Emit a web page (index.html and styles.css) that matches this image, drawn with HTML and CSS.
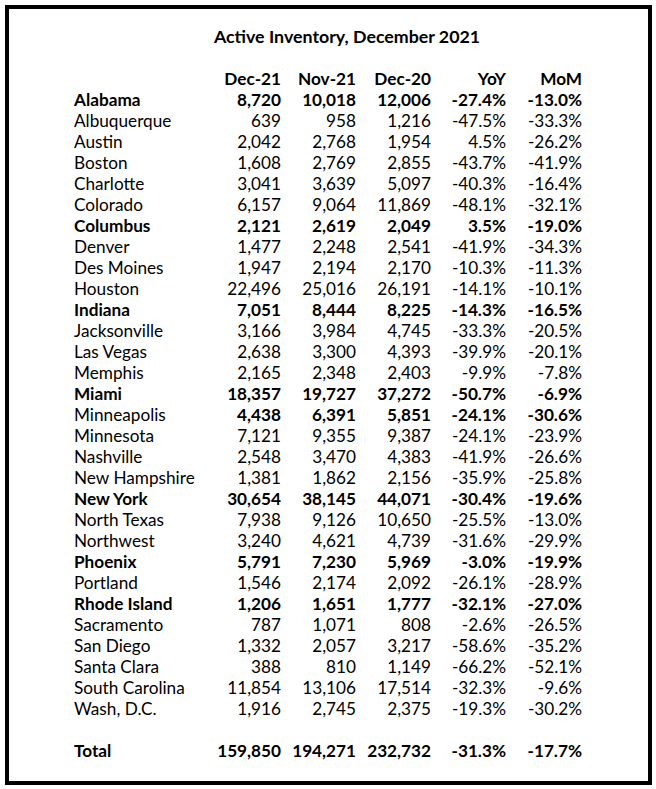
FILE: index.html
```html
<!DOCTYPE html>
<html>
<head>
<meta charset="utf-8">
<link rel="stylesheet" href="styles.css">
</head>
<body>
<div class="frame">
  <div class="title">Active Inventory, December 2021</div>
  <div class="sheet">
    <div class="row head"><span></span><span>Dec-21</span><span>Nov-21</span><span>Dec-20</span><span>YoY</span><span>MoM</span></div>
    <div class="row b"><span>Alabama</span><span>8,720</span><span>10,018</span><span>12,006</span><span>-27.4%</span><span>-13.0%</span></div>
    <div class="row"><span>Albuquerque</span><span>639</span><span>958</span><span>1,216</span><span>-47.5%</span><span>-33.3%</span></div>
    <div class="row"><span>Austin</span><span>2,042</span><span>2,768</span><span>1,954</span><span>4.5%</span><span>-26.2%</span></div>
    <div class="row"><span>Boston</span><span>1,608</span><span>2,769</span><span>2,855</span><span>-43.7%</span><span>-41.9%</span></div>
    <div class="row"><span>Charlotte</span><span>3,041</span><span>3,639</span><span>5,097</span><span>-40.3%</span><span>-16.4%</span></div>
    <div class="row"><span>Colorado</span><span>6,157</span><span>9,064</span><span>11,869</span><span>-48.1%</span><span>-32.1%</span></div>
    <div class="row b"><span>Columbus</span><span>2,121</span><span>2,619</span><span>2,049</span><span>3.5%</span><span>-19.0%</span></div>
    <div class="row"><span>Denver</span><span>1,477</span><span>2,248</span><span>2,541</span><span>-41.9%</span><span>-34.3%</span></div>
    <div class="row"><span>Des Moines</span><span>1,947</span><span>2,194</span><span>2,170</span><span>-10.3%</span><span>-11.3%</span></div>
    <div class="row"><span>Houston</span><span>22,496</span><span>25,016</span><span>26,191</span><span>-14.1%</span><span>-10.1%</span></div>
    <div class="row b"><span>Indiana</span><span>7,051</span><span>8,444</span><span>8,225</span><span>-14.3%</span><span>-16.5%</span></div>
    <div class="row"><span>Jacksonville</span><span>3,166</span><span>3,984</span><span>4,745</span><span>-33.3%</span><span>-20.5%</span></div>
    <div class="row"><span>Las Vegas</span><span>2,638</span><span>3,300</span><span>4,393</span><span>-39.9%</span><span>-20.1%</span></div>
    <div class="row"><span>Memphis</span><span>2,165</span><span>2,348</span><span>2,403</span><span>-9.9%</span><span>-7.8%</span></div>
    <div class="row b"><span>Miami</span><span>18,357</span><span>19,727</span><span>37,272</span><span>-50.7%</span><span>-6.9%</span></div>
    <div class="row bn"><span>Minneapolis</span><span>4,438</span><span>6,391</span><span>5,851</span><span>-24.1%</span><span>-30.6%</span></div>
    <div class="row"><span>Minnesota</span><span>7,121</span><span>9,355</span><span>9,387</span><span>-24.1%</span><span>-23.9%</span></div>
    <div class="row"><span>Nashville</span><span>2,548</span><span>3,470</span><span>4,383</span><span>-41.9%</span><span>-26.6%</span></div>
    <div class="row"><span>New Hampshire</span><span>1,381</span><span>1,862</span><span>2,156</span><span>-35.9%</span><span>-25.8%</span></div>
    <div class="row b"><span>New York</span><span>30,654</span><span>38,145</span><span>44,071</span><span>-30.4%</span><span>-19.6%</span></div>
    <div class="row"><span>North Texas</span><span>7,938</span><span>9,126</span><span>10,650</span><span>-25.5%</span><span>-13.0%</span></div>
    <div class="row"><span>Northwest</span><span>3,240</span><span>4,621</span><span>4,739</span><span>-31.6%</span><span>-29.9%</span></div>
    <div class="row b"><span>Phoenix</span><span>5,791</span><span>7,230</span><span>5,969</span><span>-3.0%</span><span>-19.9%</span></div>
    <div class="row"><span>Portland</span><span>1,546</span><span>2,174</span><span>2,092</span><span>-26.1%</span><span>-28.9%</span></div>
    <div class="row b"><span>Rhode Island</span><span>1,206</span><span>1,651</span><span>1,777</span><span>-32.1%</span><span>-27.0%</span></div>
    <div class="row"><span>Sacramento</span><span>787</span><span>1,071</span><span>808</span><span>-2.6%</span><span>-26.5%</span></div>
    <div class="row"><span>San Diego</span><span>1,332</span><span>2,057</span><span>3,217</span><span>-58.6%</span><span>-35.2%</span></div>
    <div class="row"><span>Santa Clara</span><span>388</span><span>810</span><span>1,149</span><span>-66.2%</span><span>-52.1%</span></div>
    <div class="row"><span>South Carolina</span><span>11,854</span><span>13,106</span><span>17,514</span><span>-32.3%</span><span>-9.6%</span></div>
    <div class="row"><span>Wash, D.C.</span><span>1,916</span><span>2,745</span><span>2,375</span><span>-19.3%</span><span>-30.2%</span></div>
    <div class="row b total"><span>Total</span><span>159,850</span><span>194,271</span><span>232,732</span><span>-31.3%</span><span>-17.7%</span></div>
  </div>
</div>
</body>
</html>
```
FILE: styles.css
```css
html, body {
  margin: 0;
  padding: 0;
  background: #fff;
}
body {
  font-family: "Lato", "Liberation Sans", sans-serif;
  font-size: 17.2px;
  color: #000;
}
.frame {
  margin: 5px;
  width: 647px;
  height: 780px;
  box-sizing: border-box;
  border: 4px solid #000;
  padding: 17px 0 0 65px;
}
.title {
  margin-left: 38px;
  width: 470px;
  text-align: center;
  font-weight: bold;
  font-size: 17.8px;
  height: 21px;
  line-height: 21px;
  margin-bottom: 21px;
}
.row {
  display: grid;
  grid-template-columns: 132px 75px 75px 75px 75px 76px;
  height: 21px;
  line-height: 21px;
  white-space: nowrap;
}
.row span {
  text-align: right;
}
.row span:first-child {
  text-align: left;
}
.head, .b {
  font-weight: bold;
}
.bn span {
  font-weight: bold;
}
.bn span:first-child {
  font-weight: normal;
}
.total {
  margin-top: 21px;
}
```
